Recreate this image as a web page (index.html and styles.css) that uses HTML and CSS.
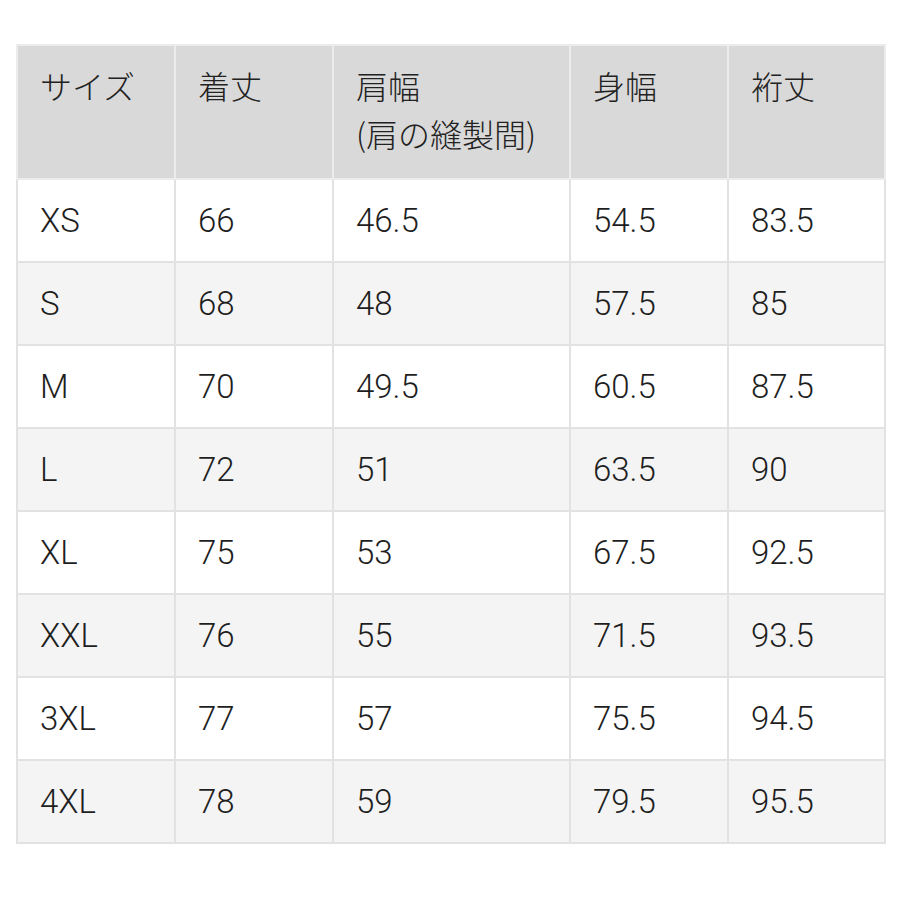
FILE: index.html
```html
<!DOCTYPE html>
<html lang="ja">
<head>
<meta charset="utf-8">
<link rel="stylesheet" href="styles.css">
</head>
<body>
<table class="size-table">
  <colgroup>
    <col class="c1"><col class="c2"><col class="c3"><col class="c4"><col class="c5">
  </colgroup>
  <thead>
    <tr>
      <th>サイズ</th>
      <th>着丈</th>
      <th>肩幅<br>(肩の縫製間)</th>
      <th>身幅</th>
      <th>裄丈</th>
    </tr>
  </thead>
  <tbody>
    <tr><td>XS</td><td>66</td><td>46.5</td><td>54.5</td><td>83.5</td></tr>
    <tr><td>S</td><td>68</td><td>48</td><td>57.5</td><td>85</td></tr>
    <tr><td>M</td><td>70</td><td>49.5</td><td>60.5</td><td>87.5</td></tr>
    <tr><td>L</td><td>72</td><td>51</td><td>63.5</td><td>90</td></tr>
    <tr><td>XL</td><td>75</td><td>53</td><td>67.5</td><td>92.5</td></tr>
    <tr><td>XXL</td><td>76</td><td>55</td><td>71.5</td><td>93.5</td></tr>
    <tr><td>3XL</td><td>77</td><td>57</td><td>75.5</td><td>94.5</td></tr>
    <tr><td>4XL</td><td>78</td><td>59</td><td>79.5</td><td>95.5</td></tr>
  </tbody>
</table>
</body>
</html>
```
FILE: styles.css
```css
html, body {
  margin: 0;
  padding: 0;
  background: #ffffff;
}
body {
  padding: 44px 16px 0 16px;
  font-family: Roboto, "Liberation Sans", "Noto Sans CJK JP", sans-serif;
  color: #222222;
}
.size-table {
  width: 868px;
  border-collapse: collapse;
  table-layout: fixed;
  border: 2px solid #dedede;
}
.c1 { width: 158px; }
.c2 { width: 158px; }
.c3 { width: 237px; }
.c4 { width: 158px; }
.c5 { width: 157px; }
.size-table th,
.size-table td {
  border: 2px solid #e2e2e2;
  text-align: left;
  padding: 0 0 0 22px;
}
.size-table th {
  background: #d9d9d9;
  border-color: #ececec;
  font-weight: 300;
  font-size: 32px;
  line-height: 48px;
  height: 134px;
  vertical-align: top;
  padding-top: 15px;
  box-sizing: border-box;
  font-family: "Noto Sans CJK JP", sans-serif;
}
.size-table td {
  font-size: 33px;
  font-weight: 300;
  height: 83px;
  box-sizing: border-box;
  vertical-align: middle;
  color: #1e1e1e;
}
.size-table tbody tr:nth-child(even) td {
  background: #f4f4f4;
}
.size-table tbody tr:nth-child(odd) td {
  background: #ffffff;
}
```
